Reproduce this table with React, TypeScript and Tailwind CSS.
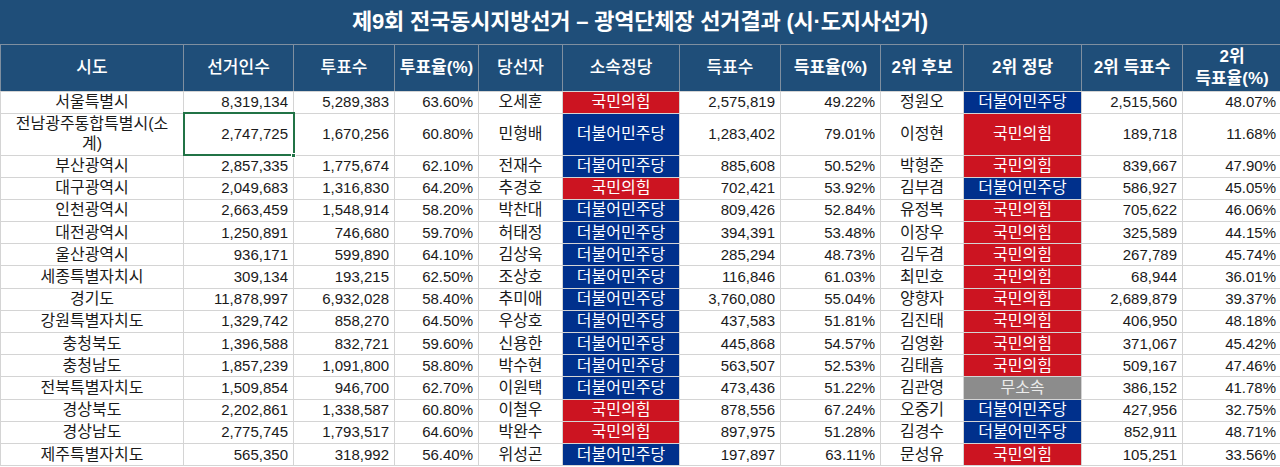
const COLS = [183, 110, 101, 84, 84, 117, 101, 100, 83, 118, 101, 99];

type Party = "ppp" | "dem" | "ind";

type Row = {
  region: string;
  voters: string;
  ballots: string;
  turnout: string;
  winner: string;
  party: Party;
  votes: string;
  share: string;
  second: string;
  secondParty: Party;
  secondVotes: string;
  secondShare: string;
};

const ROWS: Row[] = [
  { region: "서울특별시", voters: "8,319,134", ballots: "5,289,383", turnout: "63.60%", winner: "오세훈", party: "ppp", votes: "2,575,819", share: "49.22%", second: "정원오", secondParty: "dem", secondVotes: "2,515,560", secondShare: "48.07%" },
  { region: "전남광주통합특별시(소계)", voters: "2,747,725", ballots: "1,670,256", turnout: "60.80%", winner: "민형배", party: "dem", votes: "1,283,402", share: "79.01%", second: "이정현", secondParty: "ppp", secondVotes: "189,718", secondShare: "11.68%" },
  { region: "부산광역시", voters: "2,857,335", ballots: "1,775,674", turnout: "62.10%", winner: "전재수", party: "dem", votes: "885,608", share: "50.52%", second: "박형준", secondParty: "ppp", secondVotes: "839,667", secondShare: "47.90%" },
  { region: "대구광역시", voters: "2,049,683", ballots: "1,316,830", turnout: "64.20%", winner: "추경호", party: "ppp", votes: "702,421", share: "53.92%", second: "김부겸", secondParty: "dem", secondVotes: "586,927", secondShare: "45.05%" },
  { region: "인천광역시", voters: "2,663,459", ballots: "1,548,914", turnout: "58.20%", winner: "박찬대", party: "dem", votes: "809,426", share: "52.84%", second: "유정복", secondParty: "ppp", secondVotes: "705,622", secondShare: "46.06%" },
  { region: "대전광역시", voters: "1,250,891", ballots: "746,680", turnout: "59.70%", winner: "허태정", party: "dem", votes: "394,391", share: "53.48%", second: "이장우", secondParty: "ppp", secondVotes: "325,589", secondShare: "44.15%" },
  { region: "울산광역시", voters: "936,171", ballots: "599,890", turnout: "64.10%", winner: "김상욱", party: "dem", votes: "285,294", share: "48.73%", second: "김두겸", secondParty: "ppp", secondVotes: "267,789", secondShare: "45.74%" },
  { region: "세종특별자치시", voters: "309,134", ballots: "193,215", turnout: "62.50%", winner: "조상호", party: "dem", votes: "116,846", share: "61.03%", second: "최민호", secondParty: "ppp", secondVotes: "68,944", secondShare: "36.01%" },
  { region: "경기도", voters: "11,878,997", ballots: "6,932,028", turnout: "58.40%", winner: "추미애", party: "dem", votes: "3,760,080", share: "55.04%", second: "양향자", secondParty: "ppp", secondVotes: "2,689,879", secondShare: "39.37%" },
  { region: "강원특별자치도", voters: "1,329,742", ballots: "858,270", turnout: "64.50%", winner: "우상호", party: "dem", votes: "437,583", share: "51.81%", second: "김진태", secondParty: "ppp", secondVotes: "406,950", secondShare: "48.18%" },
  { region: "충청북도", voters: "1,396,588", ballots: "832,721", turnout: "59.60%", winner: "신용한", party: "dem", votes: "445,868", share: "54.57%", second: "김영환", secondParty: "ppp", secondVotes: "371,067", secondShare: "45.42%" },
  { region: "충청남도", voters: "1,857,239", ballots: "1,091,800", turnout: "58.80%", winner: "박수현", party: "dem", votes: "563,507", share: "52.53%", second: "김태흠", secondParty: "ppp", secondVotes: "509,167", secondShare: "47.46%" },
  { region: "전북특별자치도", voters: "1,509,854", ballots: "946,700", turnout: "62.70%", winner: "이원택", party: "dem", votes: "473,436", share: "51.22%", second: "김관영", secondParty: "ind", secondVotes: "386,152", secondShare: "41.78%" },
  { region: "경상북도", voters: "2,202,861", ballots: "1,338,587", turnout: "60.80%", winner: "이철우", party: "ppp", votes: "878,556", share: "67.24%", second: "오중기", secondParty: "dem", secondVotes: "427,956", secondShare: "32.75%" },
  { region: "경상남도", voters: "2,775,745", ballots: "1,793,517", turnout: "64.60%", winner: "박완수", party: "ppp", votes: "897,975", share: "51.28%", second: "김경수", secondParty: "dem", secondVotes: "852,911", secondShare: "48.71%" },
  { region: "제주특별자치도", voters: "565,350", ballots: "318,992", turnout: "56.40%", winner: "위성곤", party: "dem", votes: "197,897", share: "63.11%", second: "문성유", secondParty: "ppp", secondVotes: "105,251", secondShare: "33.56%" },
];

const PARTY: Record<Party, { label: string; cls: string }> = {
  ppp: { label: "국민의힘", cls: "bg-[#cc1421] text-white" },
  dem: { label: "더불어민주당", cls: "bg-[#00308c] text-white" },
  ind: { label: "무소속", cls: "bg-[#8c8c8c] text-[#ececec]" },
};

const HEADERS: { label: React.ReactNode; bold?: boolean }[] = [
  { label: "시도" },
  { label: "선거인수" },
  { label: "투표수" },
  { label: "투표율(%)", bold: true },
  { label: "당선자" },
  { label: "소속정당" },
  { label: "득표수" },
  { label: "득표율(%)", bold: true },
  { label: "2위 후보", bold: true },
  { label: "2위 정당", bold: true },
  { label: "2위 득표수", bold: true },
  { label: <>2위<br />득표율(%)</>, bold: true },
];

const cell = "border border-[#d4d4d4] p-0 align-middle";
const num = `${cell} text-right pr-[5px]`;
// Korean text cells render a touch larger than the digits
const mid = `${cell} text-center text-[16px]`;

function PartyCell({ party }: { party: Party }) {
  const p = PARTY[party];
  return <td className={`${cell} text-center text-[16px] ${p.cls}`}>{p.label}</td>;
}

export default function App() {
  return (
    <div className="w-[1280px] h-[467px] overflow-hidden bg-white text-[15px] leading-[18px] text-[#1a1a1a] font-['Liberation_Sans','Noto_Sans_CJK_KR',sans-serif]">
      {/* Title */}
      <div className="h-[45px] bg-[#1f4e79] flex items-center justify-center border-b border-[#7f8fa0]">
        <h1 className="text-white font-bold text-[22px] tracking-[-0.2px]">
          제9회 전국동시지방선거 – 광역단체장 선거결과 (시·도지사선거)
        </h1>
      </div>

      <table className="table-fixed border-collapse w-[1280px]">
        <colgroup>
          {COLS.map((w, i) => <col key={i} style={{ width: w }} />)}
        </colgroup>
        <thead>
          <tr className="h-[46px] bg-[#1f4e79] text-white">
            {HEADERS.map((h, i) => (
              <th
                key={i}
                className={`border-x border-[#7f8fa0] border-t-0 border-b border-b-[#d4d4d4] text-center text-[17px] leading-[22px] ${h.bold ? "font-bold" : "font-medium"}`}
              >
                {h.label}
              </th>
            ))}
          </tr>
        </thead>
        <tbody>
          {ROWS.map((r, i) => {
            const two = i === 1;
            return (
              <tr key={r.region} className={two ? "h-[42px]" : i === 0 ? "h-[22px]" : "h-[22.2px]"}>
                <td className={`${mid} ${two ? "leading-[20px]" : ""}`}>
                  {two ? <>전남광주통합특별시(소<br />계)</> : r.region}
                </td>
                {two ? (
                  <td className={`${num} relative outline-2 outline-[#217346] -outline-offset-1`}>
                    {r.voters}
                    <span className="absolute right-[-3px] bottom-[-3px] w-[5px] h-[5px] bg-[#217346] border border-white" />
                  </td>
                ) : (
                  <td className={num}>{r.voters}</td>
                )}
                <td className={num}>{r.ballots}</td>
                <td className={num}>{r.turnout}</td>
                <td className={mid}>{r.winner}</td>
                <PartyCell party={r.party} />
                <td className={num}>{r.votes}</td>
                <td className={num}>{r.share}</td>
                <td className={mid}>{r.second}</td>
                <PartyCell party={r.secondParty} />
                <td className={num}>{r.secondVotes}</td>
                <td className={num}>{r.secondShare}</td>
              </tr>
            );
          })}
        </tbody>
      </table>
    </div>
  );
}
